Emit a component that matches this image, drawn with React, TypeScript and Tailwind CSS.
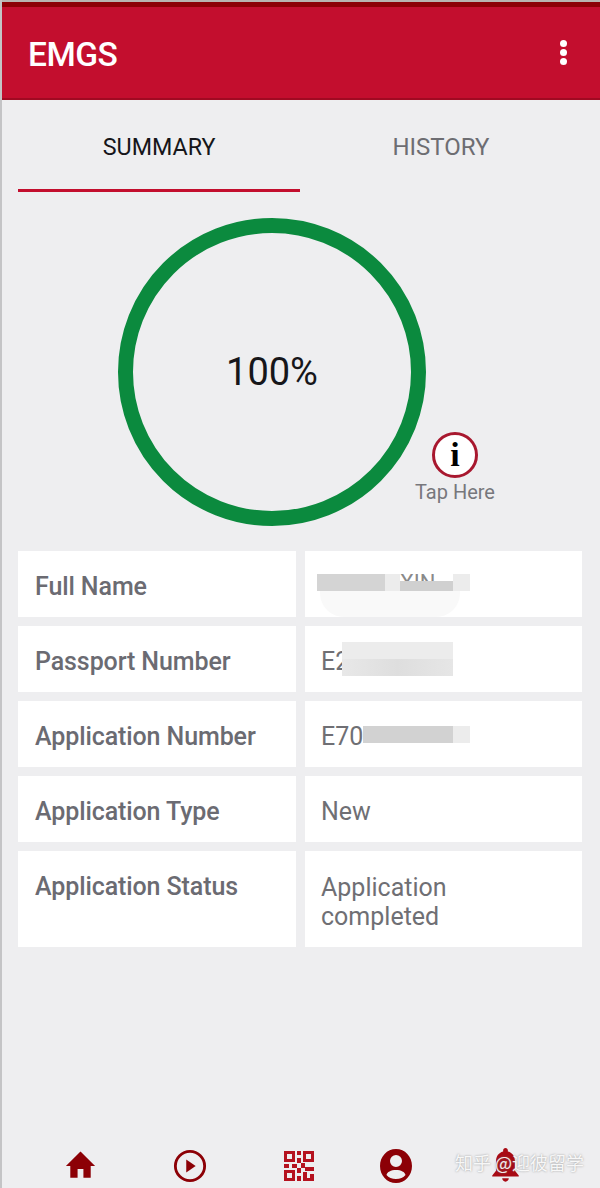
import React from "react";

const labelCls = "h-[66px] bg-white pl-[17px] pt-[6px] flex items-center text-[#6b6b72] text-[25px] font-medium tracking-[-0.1px]";
const valueCls = "h-[66px] bg-white pl-[16px] flex items-center text-[#6f6f74] text-[25px]";

const App: React.FC = () => {
  return (
    <div className="relative flex flex-col w-[600px] h-[1188px] overflow-hidden bg-[#eeeef0] border-l-2 border-[#c4c4c6] font-['Roboto',sans-serif] box-border">
      {/* header */}
      <div className="border-t-2 border-[#b9b4b0] bg-[#c30e2e]">
        <div className="h-[5px] bg-[#8c0006]"></div>
        <div className="h-[93px] flex items-center justify-between pl-[26px] pr-[33px] border-b-2 border-[#a00a22]">
          <span className="text-white text-[33.5px] font-medium leading-none tracking-[-0.5px] pt-[5px]">EMGS</span>
          <div className="flex flex-col gap-[2px]">
            <div className="w-[7px] h-[7px] rounded-full bg-white"></div>
            <div className="w-[7px] h-[7px] rounded-full bg-white"></div>
            <div className="w-[7px] h-[7px] rounded-full bg-white"></div>
          </div>
        </div>
      </div>

      {/* tabs */}
      <div className="flex px-[16px] h-[92px]">
        <div className="w-[282px] h-[92px] flex items-center justify-center pt-[5px] border-b-[3px] border-[#c30e2e] text-[#16161a] text-[24px]">
          <span className="scale-x-[0.97]">SUMMARY</span>
        </div>
        <div className="w-[282px] h-[92px] flex items-center justify-center pt-[5px] border-b-[3px] border-transparent text-[#6d6d72] text-[24px]">
          <span>HISTORY</span>
        </div>
      </div>

      {/* progress */}
      <div className="relative h-[359px] pl-[116px] pt-[26px]">
        <div className="w-[308px] h-[308px] rounded-full border-[15px] border-[#0b8a3e] flex items-center justify-center text-[#16161a] text-[38px] leading-none">
          100%
        </div>
        <div className="absolute left-[408px] top-[240px] w-[90px] flex flex-col items-center">
          <div className="w-[46px] h-[46px] rounded-full border-[3px] border-[#a8182f] bg-white flex items-center justify-center font-['Liberation_Serif',serif] font-bold text-black text-[34px] leading-none">
            i
          </div>
          <span className="text-[#77777c] text-[20px] leading-none mt-[4px] whitespace-nowrap">Tap Here</span>
        </div>
      </div>

      {/* details */}
      <div className="relative grid grid-cols-[278px_277px] gap-[9px] pl-[16px]">
        <div className={labelCls}>Full Name</div>
        <div className="relative h-[66px] bg-white pl-[12px] flex items-center">
          {/* smudge left by the blurring */}
          <div className="absolute left-[15px] top-[40px] w-[140px] h-[26px] bg-[#f9f9f9] rounded-b-[24px]"></div>
          <div className="relative flex h-[17px] mb-[3px]">
            <div className="w-[68px] bg-[#d4d4d4]"></div>
            <div className="w-[15px] bg-[#ececec]"></div>
            <div className="relative w-[53px] text-[#8a8a8a] text-[22px] leading-[17px]">
              XIN
              <div className="absolute left-0 right-0 bottom-0 h-[10px] bg-[#d0d0d0]"></div>
            </div>
            <div className="w-[17px] bg-[#ececec]"></div>
          </div>
        </div>

        <div className={labelCls}>Passport Number</div>
        <div className={valueCls}>
          <span className="pt-[6px] w-[21px]">E2</span>
          <div className="flex flex-col w-[111px] h-[34px]">
            <div className="h-[17px] bg-[#ececec]"></div>
            <div className="h-[17px] bg-gradient-to-r from-[#e8e8e8] via-[#dedede] to-[#e6e6e6]"></div>
          </div>
        </div>

        <div className={labelCls}>Application Number</div>
        <div className={valueCls}>
          <span className="pt-[6px] w-[42px]">E70</span>
          <div className="w-[90px] h-[17px] bg-[#d2d2d2]"></div>
          <div className="w-[17px] h-[17px] bg-[#ececec]"></div>
        </div>

        <div className={labelCls}>Application Type</div>
        <div className={valueCls}>
          <span className="pt-[6px]">New</span>
        </div>

        <div className="h-[96px] bg-white pl-[17px] pt-[21px] text-[#6b6b72] text-[25px] leading-[29px] font-medium tracking-[-0.1px]">
          Application Status
        </div>
        <div className="h-[96px] bg-white pl-[16px] pt-[22px] text-[#6f6f74] text-[25px] leading-[29px]">
          Application
          <br />
          completed
        </div>
      </div>

      {/* bottom nav */}
      <div className="mt-auto mb-[2px] h-[40px] flex items-center pl-[61px] text-[#8c0006]">
        <svg className="w-[35px] h-[35px] mb-[3px]" viewBox="0 0 24 24" fill="currentColor">
          <path d="M10 21v-6h4v6h5v-8h3L12 3 2 13h3v8z" />
        </svg>
        <svg className="w-[36px] h-[34px] ml-[74px]" viewBox="0 0 36 36" fill="none" stroke="currentColor" strokeWidth="3">
          <circle cx="18" cy="18" r="15.5" />
          <path d="M14 11l10 7-10 7z" fill="currentColor" stroke="none" />
        </svg>
        <svg className="w-[32px] h-[32px] ml-[75px] text-[#b5121f]" viewBox="0 0 32 32" fill="currentColor">
          <path fillRule="evenodd" d="M1 1h11v11H1zM4 4v5h5V4zM20 1h11v11H20zM23 4v5h5V4zM1 20h11v11H1zM4 23v5h5v-5z" />
          <path d="M14 1h4v4h-4zM14 8h4v5h-4zM9 14h5v4H9zM1 14h5v4H1zM18 13h4v5h-4zM14 18h4v5h-4zM22 17h9v4h-9zM20 22h4v9h-4zM14 26h4v5h-4zM27 24h4v7h-7v-3h3z" />
        </svg>
        <svg className="w-[34px] h-[36px] ml-[64px]" viewBox="0 0 34 36" fill="currentColor">
          <path fillRule="evenodd" d="M17 1c9 0 16 7.500 16 17s-7 17-16 17S1 27.500 1 18 8 1 17 1zm0 6a6 6 0 100 12 6 6 0 000-12zM17 22c-5 0-9 2-9.500 5 2 2.500 5.500 4 9.500 4s7.500-1.500 9.500-4c-.5-3-4.500-5-9.500-5z" />
        </svg>
        <svg className="w-[33px] h-[36px] ml-[76px] text-[#a80a14]" viewBox="0 0 30 38" fill="currentColor">
          <path d="M15 0c1.500 0 2.500 1 2.500 2.500v1.200C22.500 5 25 9 25 14v10l4 5v1H1v-1l4-5V14C5 9 7.500 5 12.500 3.700V2.500C12.500 1 13.500 0 15 0zM11.500 32h7c0 2-1.500 3.500-3.500 3.500S11.500 34 11.500 32z" />
        </svg>
      </div>

      {/* watermark */}
      <div className="absolute left-[453px] top-[1151px] text-white/90 text-[18px] leading-[22px] whitespace-nowrap font-['Noto_Sans_CJK_SC',sans-serif] [text-shadow:0_0_2px_rgba(120,120,120,0.8)]">
        知乎 @迎彼留学
      </div>
    </div>
  );
};

export default App;
